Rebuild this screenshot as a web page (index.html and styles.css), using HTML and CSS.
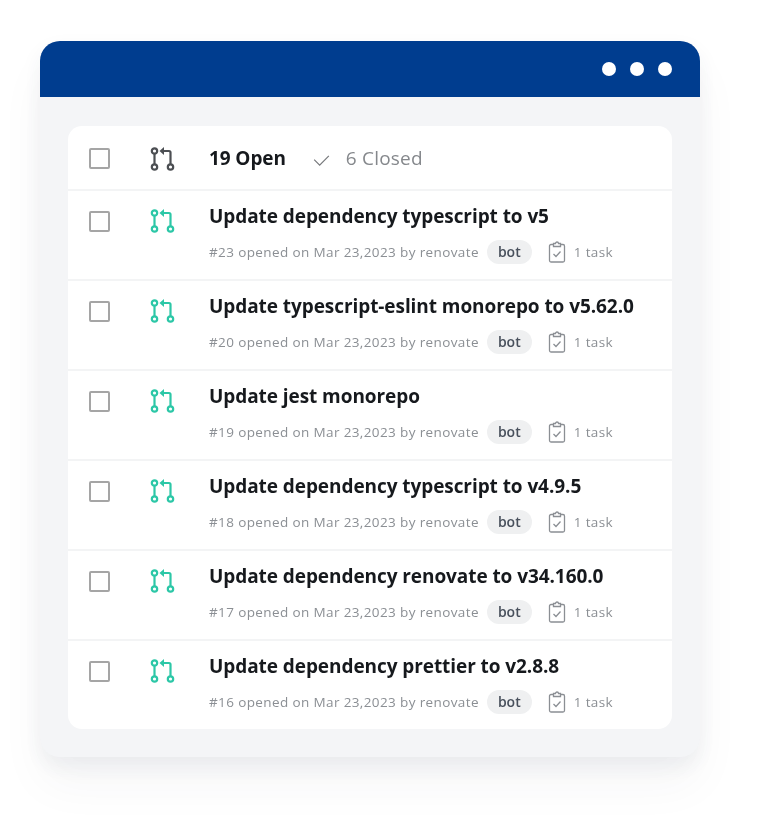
FILE: index.html
```html
<!DOCTYPE html>
<html lang="en">
<head>
    <meta charset="UTF-8">
    <meta name="viewport" content="width=device-width, initial-scale=1.0">
    <title>Pull requests</title>
    <link rel="stylesheet" href="styles.css">
</head>
<body>
    <svg class="icon-defs" width="0" height="0">
        <symbol id="pr" viewBox="0 0 26 24">
            <circle cx="4.500" cy="4" r="2.700"/>
            <circle cx="4.500" cy="20" r="2.700"/>
            <circle cx="20.500" cy="20" r="2.700"/>
            <path d="M4.500 6.700v10.600M20.500 17.300V5.500a1.500 1.500 0 0 0-1.500-1.500H13"/>
            <path class="arrow" d="M14 0v8L9.500 4z"/>
        </symbol>
        <symbol id="task" viewBox="0 0 18 22">
            <path d="M5.500 3.500H3a1.500 1.500 0 0 0-1.500 1.500v14.500A1.500 1.500 0 0 0 3 21h12a1.500 1.500 0 0 0 1.500-1.500V5A1.500 1.500 0 0 0 15 3.500h-2.500"/>
            <path d="M5.500 5.500v-3h2a1.500 1.500 0 0 1 3 0h2v3z"/>
            <path d="M5.500 13l2.500 2.500 4.500-5"/>
        </symbol>
    </svg>

    <div class="window">
        <div class="window-bar">
            <span class="dot"></span>
            <span class="dot"></span>
            <span class="dot"></span>
        </div>
        <div class="window-body">
            <div class="card">
                <div class="head-row">
                    <span class="checkbox"></span>
                    <svg class="pr-icon dark"><use href="#pr"/></svg>
                    <div class="tabs">
                        <span class="open">19 Open</span>
                        <svg class="check" viewBox="0 0 18 12"><path d="M1 5l6 6L17 1"/></svg>
                        <span class="closed">6 Closed</span>
                    </div>
                </div>

                <div class="row">
                    <span class="checkbox"></span>
                    <svg class="pr-icon"><use href="#pr"/></svg>
                    <div class="info">
                        <h3>Update dependency typescript to v5</h3>
                        <p class="meta"><span>#23 opened on Mar 23,2023 by renovate</span><span class="bot">bot</span><svg class="task-icon"><use href="#task"/></svg><span>1 task</span></p>
                    </div>
                </div>

                <div class="row">
                    <span class="checkbox"></span>
                    <svg class="pr-icon"><use href="#pr"/></svg>
                    <div class="info">
                        <h3>Update typescript-eslint monorepo to v5.62.0</h3>
                        <p class="meta"><span>#20 opened on Mar 23,2023 by renovate</span><span class="bot">bot</span><svg class="task-icon"><use href="#task"/></svg><span>1 task</span></p>
                    </div>
                </div>

                <div class="row">
                    <span class="checkbox"></span>
                    <svg class="pr-icon"><use href="#pr"/></svg>
                    <div class="info">
                        <h3>Update jest monorepo</h3>
                        <p class="meta"><span>#19 opened on Mar 23,2023 by renovate</span><span class="bot">bot</span><svg class="task-icon"><use href="#task"/></svg><span>1 task</span></p>
                    </div>
                </div>

                <div class="row">
                    <span class="checkbox"></span>
                    <svg class="pr-icon"><use href="#pr"/></svg>
                    <div class="info">
                        <h3>Update dependency typescript to v4.9.5</h3>
                        <p class="meta"><span>#18 opened on Mar 23,2023 by renovate</span><span class="bot">bot</span><svg class="task-icon"><use href="#task"/></svg><span>1 task</span></p>
                    </div>
                </div>

                <div class="row">
                    <span class="checkbox"></span>
                    <svg class="pr-icon"><use href="#pr"/></svg>
                    <div class="info">
                        <h3>Update dependency renovate to v34.160.0</h3>
                        <p class="meta"><span>#17 opened on Mar 23,2023 by renovate</span><span class="bot">bot</span><svg class="task-icon"><use href="#task"/></svg><span>1 task</span></p>
                    </div>
                </div>

                <div class="row">
                    <span class="checkbox"></span>
                    <svg class="pr-icon"><use href="#pr"/></svg>
                    <div class="info">
                        <h3>Update dependency prettier to v2.8.8</h3>
                        <p class="meta"><span>#16 opened on Mar 23,2023 by renovate</span><span class="bot">bot</span><svg class="task-icon"><use href="#task"/></svg><span>1 task</span></p>
                    </div>
                </div>
            </div>
        </div>
    </div>
</body>
</html>
```

FILE: styles.css
```css
html {
    background-color: #fff;
}

body {
    margin: 0;
    min-height: 100vh;
    padding: 41px 68px 0 40px;
    box-sizing: border-box;
    font-family: "Open Sans", sans-serif;
    color: #16191d;
}

.icon-defs {
    display: block;
    height: 0;
}

.window {
    width: 660px;
    height: 716px;
    border-radius: 20px;
    background-color: #f4f5f7;
    box-shadow: 0 10px 22px rgba(40, 50, 80, 0.07), 0 28px 48px rgba(40, 50, 80, 0.04);
    overflow: hidden;
    filter: blur(0.5px); /* the source picture is soft */
}

.window-bar {
    height: 56px;
    background-color: #003d8f;
    display: flex;
    justify-content: flex-end;
    align-items: center;
    gap: 14px;
    padding-right: 28px;
    box-sizing: border-box;
}

.dot {
    width: 14px;
    height: 14px;
    border-radius: 50%;
    background-color: #fff;
}

.window-body {
    padding: 29px 28px 0;
}

.card {
    background-color: #fff;
    border-radius: 14px;
    overflow: hidden;
}

.head-row,
.row {
    display: grid;
    grid-template-columns: 21px 26px 1fr;
    column-gap: 40px;
    padding-left: 21px;
    box-sizing: border-box;
}

.head-row {
    height: 63px;
    align-items: center;
    padding-top: 2px;
}

.row {
    height: 90px;
    padding-top: 20px;
    border-top: 2px solid #f3f4f5;
}

.checkbox {
    width: 21px;
    height: 21px;
    border: 2px solid #a5a5a5;
    border-radius: 2px;
    box-sizing: border-box;
    background-color: #fff;
}

.pr-icon {
    width: 26px;
    height: 24px;
    color: #2cc7a7;
    fill: none;
    stroke: currentColor;
    stroke-width: 2.200;
}

.row .pr-icon {
    margin-top: -2px;
}

.pr-icon.dark {
    color: #4c4f53;
}

.arrow {
    fill: currentColor;
    stroke: none;
}

.tabs,
.info {
    margin-left: -7px;
}

.tabs {
    display: flex;
    align-items: center;
    margin-top: -2px;
    font-size: 19px;
}

.open {
    font-weight: 700;
    letter-spacing: -0.1px;
}

.check {
    width: 17px;
    height: 11px;
    margin: 5px 0 0 27px;
    fill: none;
    stroke: #77797c;
    stroke-width: 1.300;
}

.closed {
    margin-left: 16px;
    color: #85888c;
    letter-spacing: 0.2px;
}

h3 {
    margin: -7px 0 0;
    font-size: 19px;
    line-height: 25px;
    font-weight: 700;
    letter-spacing: -0.07px;
}

.meta {
    display: flex;
    align-items: center;
    margin: 11px 0 0;
    font-size: 13.500px;
    line-height: 24px;
    letter-spacing: 0.38px;
    color: #8b8f94;
}

.bot {
    margin-left: 8px;
    padding: 0 11px;
    border-radius: 12px;
    background-color: #eff0f1;
    color: #48505c;
    font-size: 14px;
    font-weight: 600;
    letter-spacing: 0;
}

.task-icon {
    width: 18px;
    height: 22px;
    margin: 0 8px 0 16px;
    fill: none;
    stroke: #8b8f94;
    stroke-width: 1.300;
}
```
